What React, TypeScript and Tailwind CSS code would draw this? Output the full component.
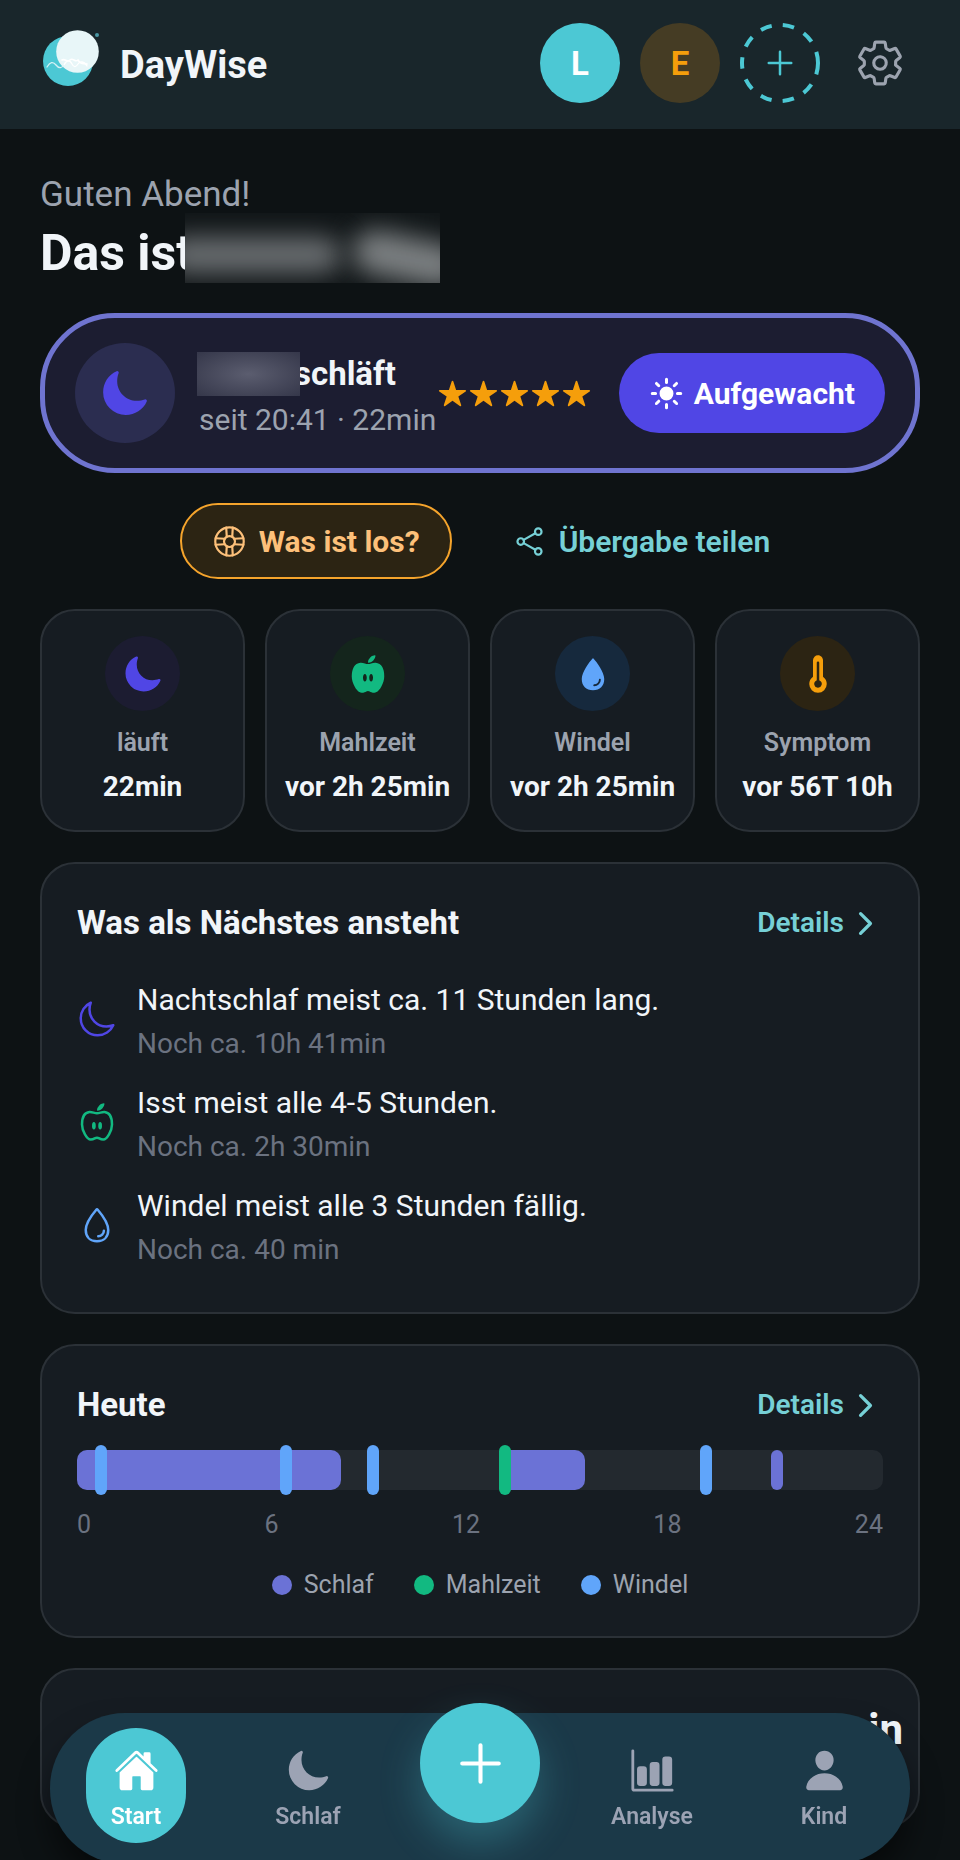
import React from 'react';
import type { IconType } from 'react-icons';
import {
  IoAdd,
  IoBarChart,
  IoChevronForward,
  IoHelpBuoyOutline,
  IoHome,
  IoMoon,
  IoMoonOutline,
  IoNutrition,
  IoNutritionOutline,
  IoPerson,
  IoSettingsOutline,
  IoShareSocialOutline,
  IoStar,
  IoSunny,
  IoThermometer,
  IoWater,
  IoWaterOutline,
} from 'react-icons/io5';

interface Tile {
  icon: IconType;
  label: string;
  value: string;
  iconClass: string;
}

interface Upcoming {
  icon: IconType;
  title: string;
  hint: string;
  iconClass: string;
}

interface NavEntry {
  icon: IconType;
  label: string;
  active?: boolean;
}

const tiles: Tile[] = [
  { icon: IoMoon, label: 'läuft', value: '22min', iconClass: 'bg-[#1c1c31] text-[#5046e5]' },
  { icon: IoNutrition, label: 'Mahlzeit', value: 'vor 2h 25min', iconClass: 'bg-[#14251c] text-[#12b981]' },
  { icon: IoWater, label: 'Windel', value: 'vor 2h 25min', iconClass: 'bg-[#16293d] text-[#60a5fa]' },
  { icon: IoThermometer, label: 'Symptom', value: 'vor 56T 10h', iconClass: 'bg-[#2c2413] text-[#f59e0b]' },
];

const upcoming: Upcoming[] = [
  { icon: IoMoonOutline, title: 'Nachtschlaf meist ca. 11 Stunden lang.', hint: 'Noch ca. 10h 41min', iconClass: 'text-[#5046e5]' },
  { icon: IoNutritionOutline, title: 'Isst meist alle 4-5 Stunden.', hint: 'Noch ca. 2h 30min', iconClass: 'text-[#12b981]' },
  { icon: IoWaterOutline, title: 'Windel meist alle 3 Stunden fällig.', hint: 'Noch ca. 40 min', iconClass: 'text-[#60a5fa]' },
];

// start and width in percent of the day
const sleeps = [
  { start: 0, width: 32.8, className: 'rounded-[10px]' },
  { start: 52.4, width: 10.6, className: 'rounded-[10px]' },
  { start: 86.1, width: 1.5, className: 'rounded-full' },
];

const events = [
  { start: 2.2, className: 'bg-[#60a5fa]' },
  { start: 25.2, className: 'bg-[#60a5fa]' },
  { start: 36, className: 'bg-[#60a5fa]' },
  { start: 52.4, className: 'bg-[#12b981]' },
  { start: 77.3, className: 'bg-[#60a5fa]' },
];

const legend = [
  { label: 'Schlaf', className: 'bg-[#6b72d6]' },
  { label: 'Mahlzeit', className: 'bg-[#12b981]' },
  { label: 'Windel', className: 'bg-[#60a5fa]' },
];

const navLeft: NavEntry[] = [
  { icon: IoHome, label: 'Start', active: true },
  { icon: IoMoon, label: 'Schlaf' },
];

const navRight: NavEntry[] = [
  { icon: IoBarChart, label: 'Analyse' },
  { icon: IoPerson, label: 'Kind' },
];

const cardStyle = 'rounded-[35px] border-2 border-[#2b3137] bg-[#161c22]';

const Logo: React.FC = () => (
  <svg width="60" height="70" viewBox="0 0 60 70" fill="none" aria-hidden="true">
    <circle cx="28" cy="33" r="25" fill="#4cc8d4" />
    <circle cx="37.5" cy="23.5" r="21.3" fill="#e8f6f8" />
    <path d="M7 39c3-5 6-6 9-2s6 3 8 0" stroke="#d5f1f5" strokeWidth="1.3" strokeLinecap="round" />
    <path d="M22 32c3-2 5 3 8 0s5 3 8 0c3 5 5 3 9 4" stroke="#fff" strokeWidth="1.6" strokeLinecap="round" />
    <path d="M24 37c3-6 6-5 8-1s4 3 6 0 6-3 9 2" stroke="#fff" strokeWidth="1.3" strokeLinecap="round" />
    <circle cx="57" cy="7" r="2" fill="#4a97a3" />
  </svg>
);

const DetailsLink: React.FC = () => (
  <a href="#details" className="flex items-center gap-1 text-[28px] leading-[34px] font-semibold text-[#76d0d6]">
    Details
    <IoChevronForward size={35} />
  </a>
);

const NavItem: React.FC<{ entry: NavEntry }> = ({ entry }) => {
  const Icon = entry.icon;
  return (
    <div className="flex flex-1 justify-center">
      <button
        className={`flex h-[115px] min-w-[100px] flex-col items-center rounded-[50px] pt-5 ${
          entry.active ? 'bg-[#4cc8d4] text-white' : 'text-[#9ca3b4]'
        }`}
      >
        <Icon size={45} />
        <span className="mt-2.5 text-[23px] leading-7 font-semibold">{entry.label}</span>
      </button>
    </div>
  );
};

export default function App() {
  return (
    <div className="min-h-screen overflow-hidden bg-[#0d1214] font-['Roboto',sans-serif] text-[#f1f5f9]">
      {/* Header */}
      <header className="flex h-[129px] items-center justify-between bg-[#19262b] pr-[55px] pb-[3px] pl-10">
        <div className="flex items-center gap-5">
          <Logo />
          <h1 className="pt-[3px] text-[38px] leading-[44px] font-bold">DayWise</h1>
        </div>
        <div className="flex items-center gap-5">
          <button className="size-20 rounded-full bg-[#4cc8d4] pt-0.5 text-[33px] font-bold text-white">L</button>
          <button className="size-20 rounded-full bg-[#453c24] pt-0.5 text-[33px] font-bold text-[#f59e0b]">E</button>
          <button aria-label="Kind hinzufügen" className="relative flex size-20 items-center justify-center text-[#4cc8d4]">
            <svg className="absolute inset-0" width="80" height="80" viewBox="0 0 80 80" fill="none">
              <circle cx="40" cy="40" r="38" stroke="currentColor" strokeWidth="4" strokeDasharray="11.5 11.2" />
            </svg>
            <IoAdd size={40} />
          </button>
          <button aria-label="Einstellungen" className="ml-[15px] text-[#9ca3af]">
            <IoSettingsOutline size={50} />
          </button>
        </div>
      </header>

      <main className="flex flex-col gap-[30px] px-10 pt-[46px]">
        {/* Greeting */}
        <div className="flex flex-col gap-[7px]">
          <p className="text-[35px] leading-10 text-[#9ca3af]">Guten Abend!</p>
          <div className="flex h-[61px] items-end">
            <h2 className="text-[50px] leading-[60px] font-bold">Das ist</h2>
            <div className="relative -ml-2 h-[70px] w-[255px] shrink-0 overflow-hidden bg-[#101517]">
              <div className="absolute top-6 -left-5 h-9 w-44 rounded-full bg-[#6b6f72] blur-[13px]" />
              <div className="absolute top-6 -right-6 h-11 w-28 rotate-12 rounded-full bg-[#7c8082] blur-[13px]" />
            </div>
          </div>
        </div>

        {/* Current sleep */}
        <section className="flex h-40 items-center rounded-[75px] border-[5px] border-[#6f74d0] bg-[#1c1d31] px-[30px]">
          <div className="flex size-[100px] shrink-0 items-center justify-center rounded-full bg-[#2b2d50] text-[#5046e5]">
            <IoMoon size={50} />
          </div>
          <div className="ml-[22px] flex-1 pt-1 whitespace-nowrap">
            <div className="flex items-center">
              <div className="relative z-10 h-11 w-[103px] bg-[radial-gradient(ellipse_at_center,#5b5d6f,#35374a)]" />
              <h3 className="-ml-1.5 text-[33px] leading-[44px] font-bold">schläft</h3>
            </div>
            <p className="mt-1.5 pl-0.5 text-[30px] leading-9 text-[#9ca3af]">seit 20:41 · 22min</p>
          </div>
          <div className="flex gap-0.5 text-[#f59e0b]" role="img" aria-label="5 Sterne">
            {[1, 2, 3, 4, 5].map((n) => (
              <IoStar key={n} size={29} />
            ))}
          </div>
          <button className="ml-7 flex h-20 items-center gap-2.5 rounded-full bg-[#5046e5] px-[30px] text-[30px] font-bold text-white">
            <IoSunny size={35} />
            Aufgewacht
          </button>
        </section>

        {/* Quick actions */}
        <div className="flex items-center justify-center gap-[30px]">
          <button className="flex h-[76px] items-center gap-3 rounded-full border-2 border-[#f5a42c] bg-[#2c2413] px-[30px] text-[30px] font-bold text-[#fdc07a]">
            <IoHelpBuoyOutline size={35} />
            Was ist los?
          </button>
          <button className="flex h-[76px] items-center gap-3 pr-2.5 pl-[30px] text-[30px] font-semibold text-[#76d0d6]">
            <IoShareSocialOutline size={35} />
            Übergabe teilen
          </button>
        </div>

        {/* Tiles */}
        <div className="grid grid-cols-4 gap-5">
          {tiles.map((tile) => (
            <button key={tile.label} className={`${cardStyle} flex flex-col items-center pt-[25px] pb-[26px] whitespace-nowrap`}>
              <span className={`flex size-[75px] items-center justify-center rounded-full ${tile.iconClass}`}>
                <tile.icon size={40} />
              </span>
              <span className="mt-[17px] text-[25px] leading-[30px] font-semibold text-[#9ca3af]">{tile.label}</span>
              <span className="mt-3 text-[28px] leading-[34px] font-bold">{tile.value}</span>
            </button>
          ))}
        </div>

        {/* Upcoming */}
        <section className={`${cardStyle} px-[35px] pt-10 pb-[45px]`}>
          <div className="flex items-center justify-between">
            <h3 className="text-[33px] leading-[38px] font-bold">Was als Nächstes ansteht</h3>
            <DetailsLink />
          </div>
          <ul className="mt-10 flex flex-col gap-6">
            {upcoming.map((item) => (
              <li key={item.title} className="flex items-start gap-5">
                <item.icon size={40} className={`mt-[17px] ${item.iconClass}`} />
                <div>
                  <p className="text-[30px] leading-9">{item.title}</p>
                  <p className="mt-[9px] text-[28px] leading-[34px] text-[#6b7280]">{item.hint}</p>
                </div>
              </li>
            ))}
          </ul>
        </section>

        {/* Today */}
        <section className={`${cardStyle} px-[35px] pt-10 pb-9`}>
          <div className="flex items-center justify-between">
            <h3 className="text-[33px] leading-[38px] font-bold">Heute</h3>
            <DetailsLink />
          </div>
          <div className="relative mt-[26px] h-10 rounded-[10px] bg-[#23292f]">
            {sleeps.map((s) => (
              <div
                key={s.start}
                className={`absolute inset-y-0 bg-[#6b72d6] ${s.className}`}
                style={{ left: `${s.start}%`, width: `${s.width}%` }}
              />
            ))}
            {events.map((e) => (
              <div key={e.start} className={`absolute -inset-y-[5px] w-3 rounded-full ${e.className}`} style={{ left: `${e.start}%` }} />
            ))}
          </div>
          <div className="mt-5 flex justify-between text-[25px] leading-[30px] text-[#6b7280]">
            <span>0</span>
            <span>6</span>
            <span>12</span>
            <span>18</span>
            <span>24</span>
          </div>
          <div className="mt-[30px] flex justify-center gap-10 text-[25px] leading-[30px] text-[#9ca3af]">
            {legend.map((l) => (
              <span key={l.label} className="flex items-center gap-3">
                <span className={`size-5 rounded-full ${l.className}`} />
                {l.label}
              </span>
            ))}
          </div>
        </section>

        <section className={`${cardStyle} h-40 px-[15px] pt-9 text-right text-[42px] leading-[48px] font-bold`}>in</section>
      </main>

      {/* Bottom navigation */}
      <nav className="fixed inset-x-[50px] -bottom-1 flex h-[151px] rounded-[75px] bg-[#1b3948] pt-[15px] shadow-[0_20px_30px_rgba(0,0,0,0.5)]">
        {navLeft.map((entry) => (
          <NavItem key={entry.label} entry={entry} />
        ))}
        <div className="flex flex-1 justify-center">
          <button
            aria-label="Hinzufügen"
            className="-mt-[25px] flex size-[120px] items-center justify-center rounded-full bg-[#4cc8d4] text-white shadow-[0_20px_40px_rgba(76,200,212,0.3)]"
          >
            <IoAdd size={65} />
          </button>
        </div>
        {navRight.map((entry) => (
          <NavItem key={entry.label} entry={entry} />
        ))}
      </nav>
    </div>
  );
}
